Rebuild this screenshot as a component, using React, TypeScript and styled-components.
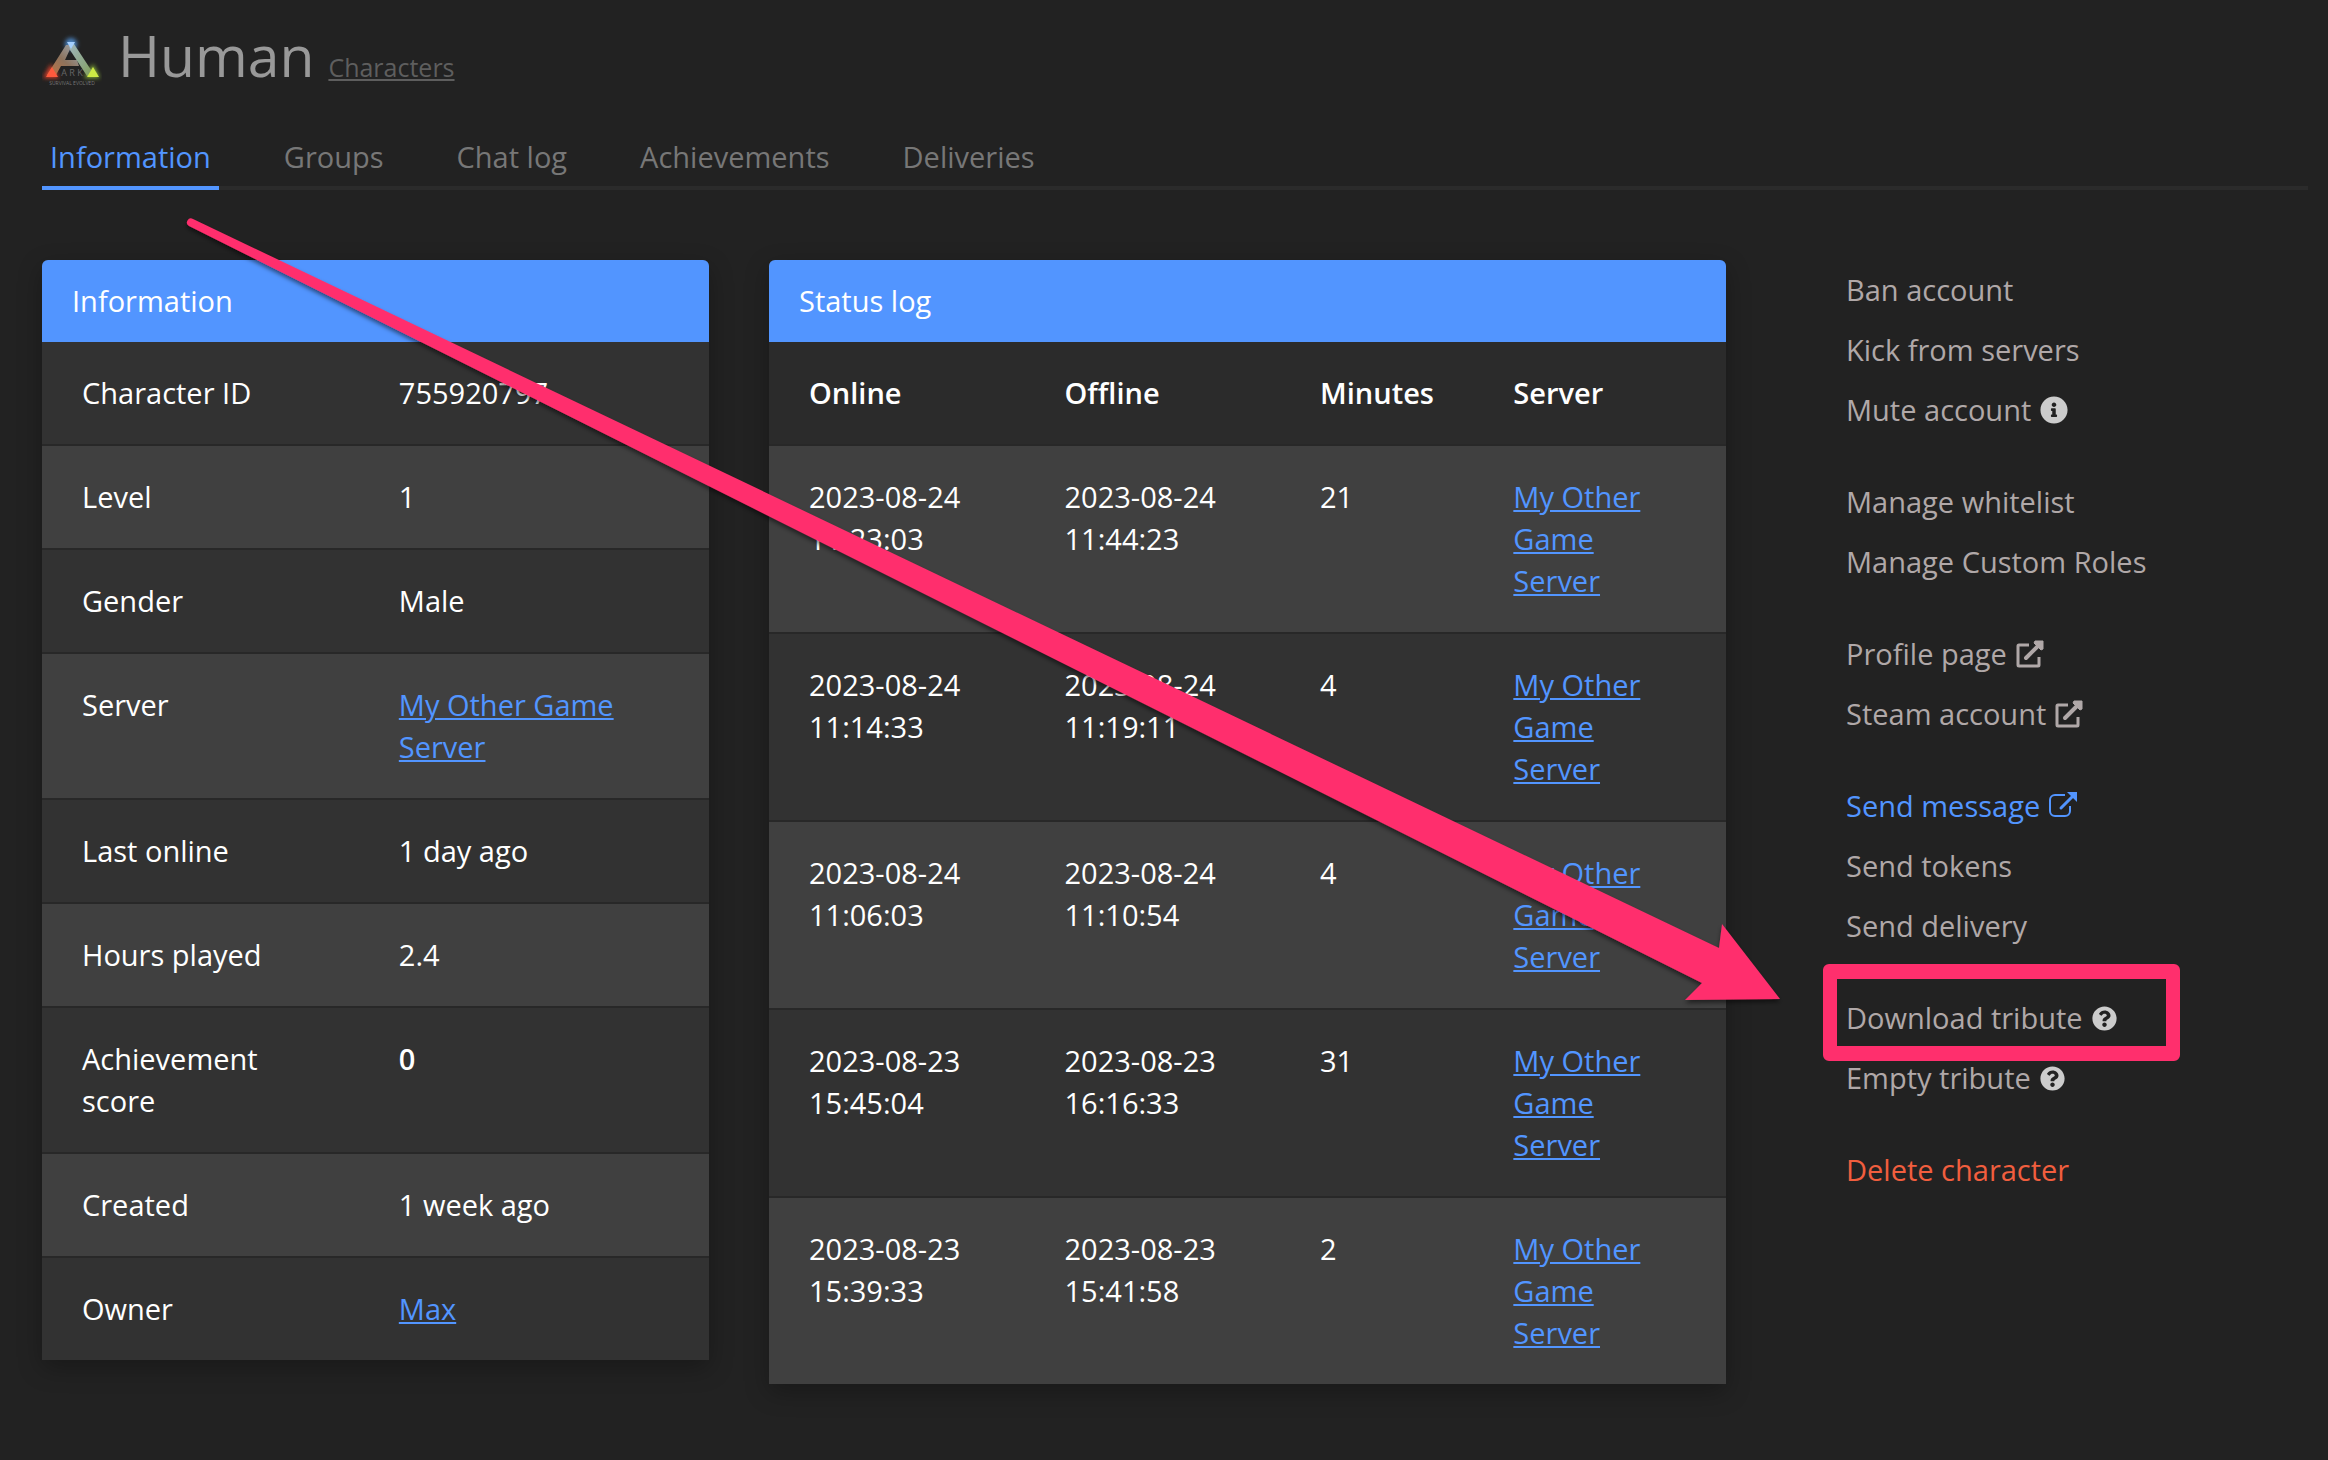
import React from "react";
import styled, { createGlobalStyle, css } from "styled-components";
import { FaInfoCircle, FaQuestionCircle } from "react-icons/fa";

const GlobalStyle = createGlobalStyle`
  *, *::before, *::after { box-sizing: border-box; }
  body {
    margin: 0;
    background: #222;
    color: #fff;
    font-family: "Open Sans", "Noto Sans", sans-serif;
    font-size: 29px;
    line-height: 42px;
  }
`;

const Page = styled.div`
  position: relative;
  min-height: 100vh;
  padding: 16px 20px 48px 42px;
`;

const Header = styled.header`
  display: flex;
  align-items: center;
`;

const Logo = styled.svg`
  display: block;
  flex: none;
  width: 60px;
  height: 64px;
  margin-right: 16px;
`;

const Heading = styled.div`
  display: flex;
  align-items: baseline;
  gap: 14px;
`;

const Title = styled.h1`
  margin: 0;
  font-size: 57px;
  line-height: 78px;
  font-weight: 400;
  color: #999;
`;

const Crumb = styled.a`
  font-size: 25px;
  color: #5e5e5e;
`;

const Tabs = styled.nav`
  display: flex;
  gap: 57px;
  margin-top: 34px;
  box-shadow: inset 0 -4px #2b2b2b;
`;

const Tab = styled.a<{ $active?: boolean }>`
  padding: 8px;
  border-bottom: 4px solid ${(p) => (p.$active ? "#5295ff" : "transparent")};
  color: ${(p) => (p.$active ? "#5295ff" : "#777")};
  text-decoration: none;
`;

const Content = styled.main`
  display: grid;
  grid-template-columns: 667fr 957fr 522fr;
  gap: 60px;
  align-items: start;
  margin-top: 70px;
`;

const Card = styled.section`
  overflow: hidden;
  border-radius: 6px 6px 0 0;
  background: #323232;
  box-shadow: 0 8px 24px rgba(0, 0, 0, 0.28);
`;

const CardTitle = styled.h2`
  margin: 0;
  padding: 20px 30px;
  background: #5295ff;
  font-size: 29px;
  font-weight: 400;
`;

const Table = styled.table`
  width: 100%;
  table-layout: fixed;
  border-collapse: separate;
  border-spacing: 0;
`;

const Col = styled.col<{ $share: number }>`
  width: ${(p) => p.$share}%;
`;

const cell = css`
  padding: 30px 40px;
  text-align: left;
  vertical-align: top;
`;

const HeadCell = styled.th`
  ${cell}
  background: #2b2b2b;
  font-weight: 600;
`;

const LabelCell = styled.th`
  ${cell}
  font-weight: 400;
`;

const Cell = styled.td`
  ${cell}
`;

const Row = styled.tr<{ $raised: boolean; $first?: boolean }>`
  background: ${(p) => (p.$raised ? "#404040" : "#323232")};
  & > * {
    border-top: ${(p) => (p.$first ? "0" : "2px solid #282828")};
  }
`;

const Strong = styled.strong`
  font-weight: 600;
`;

const Link = styled.a`
  color: #5295ff;
`;

const Actions = styled.aside`
  display: flex;
  flex-direction: column;
  gap: 32px;
  padding-left: 60px;
`;

const ActionGroup = styled.div`
  display: flex;
  flex-direction: column;
  align-items: flex-start;
`;

const tones = { normal: "#b0a8a8", primary: "#5295ff", danger: "#f15e3e" };
type Tone = keyof typeof tones;

const Action = styled.a<{ $tone: Tone }>`
  display: inline-flex;
  align-items: center;
  gap: 9px;
  line-height: 60px;
  color: ${(p) => tones[p.$tone]};
  text-decoration: none;
  white-space: nowrap;
`;

const Hint = styled.span`
  display: inline-flex;
  color: #ccc;
`;

const OpenIcon = styled.svg`
  width: 28px;
  height: 28px;
  fill: none;
  stroke: currentColor;
`;

const Annotation = styled.svg`
  position: absolute;
  top: 0;
  left: 0;
  width: 2328px;
  height: 1460px;
  max-width: 100%;
  overflow: visible;
  pointer-events: none;
`;

type Value = { text: string; kind?: "link" | "strong" };

const info: { label: string; value: Value }[] = [
  { label: "Character ID", value: { text: "755920797" } },
  { label: "Level", value: { text: "1" } },
  { label: "Gender", value: { text: "Male" } },
  { label: "Server", value: { text: "My Other Game Server", kind: "link" } },
  { label: "Last online", value: { text: "1 day ago" } },
  { label: "Hours played", value: { text: "2.4" } },
  { label: "Achievement score", value: { text: "0", kind: "strong" } },
  { label: "Created", value: { text: "1 week ago" } },
  { label: "Owner", value: { text: "Max", kind: "link" } },
];

const statusLog = [
  ["2023-08-24 11:23:03", "2023-08-24 11:44:23", "21"],
  ["2023-08-24 11:14:33", "2023-08-24 11:19:11", "4"],
  ["2023-08-24 11:06:03", "2023-08-24 11:10:54", "4"],
  ["2023-08-23 15:45:04", "2023-08-23 16:16:33", "31"],
  ["2023-08-23 15:39:33", "2023-08-23 15:41:58", "2"],
];

type Icon = "info" | "help" | "open" | "openLight";
type ActionItem = { label: string; icon?: Icon; tone?: Tone };

const actionGroups: ActionItem[][] = [
  [{ label: "Ban account" }, { label: "Kick from servers" }, { label: "Mute account", icon: "info" }],
  [{ label: "Manage whitelist" }, { label: "Manage Custom Roles" }],
  [{ label: "Profile page", icon: "open" }, { label: "Steam account", icon: "open" }],
  [
    { label: "Send message", icon: "openLight", tone: "primary" },
    { label: "Send tokens" },
    { label: "Send delivery" },
  ],
  [{ label: "Download tribute", icon: "help" }, { label: "Empty tribute", icon: "help" }],
  [{ label: "Delete character", tone: "danger" }],
];

function ActionIcon({ icon }: { icon: Icon }) {
  if (icon === "info") return <Hint><FaInfoCircle size={28} /></Hint>;
  if (icon === "help") return <Hint><FaQuestionCircle size={25} /></Hint>;
  if (icon === "openLight") {
    return (
      <OpenIcon viewBox="0 0 28 28" aria-hidden="true">
        <path strokeWidth="2" d="M16 3H6a5 5 0 0 0-5 5v11a5 5 0 0 0 5 5h10a5 5 0 0 0 5-5v-5" />
        <path strokeWidth="3" strokeLinecap="round" d="M12 16 23 5" />
        <path fill="currentColor" stroke="none" d="M18 0h10v10z" />
      </OpenIcon>
    );
  }
  return (
    <OpenIcon viewBox="0 0 28 28" aria-hidden="true">
      <path
        strokeWidth="3"
        strokeLinejoin="round"
        d="M13 5H3a1 1 0 0 0-1 1v19a1 1 0 0 0 1 1h19a1 1 0 0 0 1-1v-8"
      />
      <path strokeWidth="4" strokeLinecap="round" d="M10 18 24 4" />
      <path
        fill="currentColor"
        strokeWidth="1"
        strokeLinejoin="round"
        d="M19 1h8v8l-2 1-7-7z"
      />
    </OpenIcon>
  );
}

function ValueText({ value }: { value: Value }) {
  if (value.kind === "link") return <Link href="#">{value.text}</Link>;
  if (value.kind === "strong") return <Strong>{value.text}</Strong>;
  return <>{value.text}</>;
}

function GameLogo() {
  return (
    <Logo viewBox="0 0 60 64" role="img" aria-label="ARK Survival Evolved">
      <defs>
        <linearGradient id="left" x1="1" y1="0" x2="0" y2="1">
          <stop offset="0" stopColor="#9ba9b4" />
          <stop offset="0.5" stopColor="#8d735d" />
          <stop offset="1" stopColor="#c4713f" />
        </linearGradient>
        <linearGradient id="right" x1="0" y1="0" x2="1" y2="1">
          <stop offset="0" stopColor="#9fb6bd" />
          <stop offset="0.6" stopColor="#8da783" />
          <stop offset="1" stopColor="#7fa04f" />
        </linearGradient>
        <filter id="glow" x="-60%" y="-60%" width="220%" height="220%">
          <feGaussianBlur stdDeviation="2" />
        </filter>
      </defs>
      <g transform="translate(0 9)">
        <g filter="url(#glow)">
          <circle cx="29" cy="12" r="6" fill="#4b85c4" />
          <path d="M1 46 9 32l8 14z" fill="#d8402a" />
          <path d="M42 46l9-14 7 14z" fill="#86b03a" />
        </g>
        <path d="M24 13h6l-7 15h12l2 6H19l-5 9H5z" fill="url(#left)" />
        <path d="M27 12h5l21 32h-8L28 18z" fill="url(#right)" />
        <path d="M25 10h8l-4 7z" fill="#a4d0ff" />
        <path d="M4 45 10 35l6 10z" fill="#ff5a3d" />
        <path d="M45 45l6-10 6 10z" fill="#cdea45" />
        <text x="30" y="44" fill="#666" fontSize="9" textAnchor="middle">A R K</text>
        <text x="30" y="53" fill="#777" fontSize="5" textAnchor="middle">SURVIVAL EVOLVED</text>
      </g>
    </Logo>
  );
}

export default function App() {
  return (
    <Page>
      <GlobalStyle />
      <Header>
        <GameLogo />
        <Heading>
          <Title>Human</Title>
          <Crumb href="#">Characters</Crumb>
        </Heading>
      </Header>
      <Tabs>
        {["Information", "Groups", "Chat log", "Achievements", "Deliveries"].map((name, i) => (
          <Tab key={name} href="#" $active={i === 0}>{name}</Tab>
        ))}
      </Tabs>
      <Content>
        <Card>
          <CardTitle>Information</CardTitle>
          <Table>
            <colgroup><Col $share={47.5} /><Col $share={52.5} /></colgroup>
            <tbody>
              {info.map((row, i) => (
                <Row key={row.label} $raised={i % 2 === 1} $first={i === 0}>
                  <LabelCell scope="row">{row.label}</LabelCell>
                  <Cell><ValueText value={row.value} /></Cell>
                </Row>
              ))}
            </tbody>
          </Table>
        </Card>
        <Card>
          <CardTitle>Status log</CardTitle>
          <Table>
            <colgroup>
              <Col $share={26.7} /><Col $share={26.7} /><Col $share={20.2} /><Col $share={26.4} />
            </colgroup>
            <thead>
              <tr>
                {["Online", "Offline", "Minutes", "Server"].map((name) => (
                  <HeadCell key={name} scope="col">{name}</HeadCell>
                ))}
              </tr>
            </thead>
            <tbody>
              {statusLog.map(([online, offline, minutes], i) => (
                <Row key={online} $raised={i % 2 === 0}>
                  <Cell>{online}</Cell>
                  <Cell>{offline}</Cell>
                  <Cell>{minutes}</Cell>
                  <Cell><Link href="#">My Other Game Server</Link></Cell>
                </Row>
              ))}
            </tbody>
          </Table>
        </Card>
        <Actions>
          {actionGroups.map((group) => (
            <ActionGroup key={group[0].label}>
              {group.map((item) => (
                <Action key={item.label} href="#" $tone={item.tone ?? "normal"}>
                  {item.label}
                  {item.icon && <ActionIcon icon={item.icon} />}
                </Action>
              ))}
            </ActionGroup>
          ))}
        </Actions>
      </Content>
      <Annotation viewBox="0 0 2328 1460" aria-hidden="true">
        <defs>
          <filter id="drop" x="-5%" y="-5%" width="110%" height="115%">
            <feDropShadow dx="0" dy="3" stdDeviation="2" floodColor="#000" floodOpacity="0.5" />
          </filter>
        </defs>
        <path
          filter="url(#drop)"
          fill="#ff2f6d"
          d="M193 219 1719 948 1722 924 1780 999 1685 1000 1702 983 189 226A4 4 0 0 1 193 219Z"
        />
        <path
          fill="#ff2f6d"
          fillRule="evenodd"
          d="M1829 964H2174a6 6 0 0 1 6 6V1055a6 6 0 0 1-6 6H1829a6 6 0 0 1-6-6V970a6 6 0 0 1 6-6ZM1837 979V1046H2166V979Z"
        />
      </Annotation>
    </Page>
  );
}
